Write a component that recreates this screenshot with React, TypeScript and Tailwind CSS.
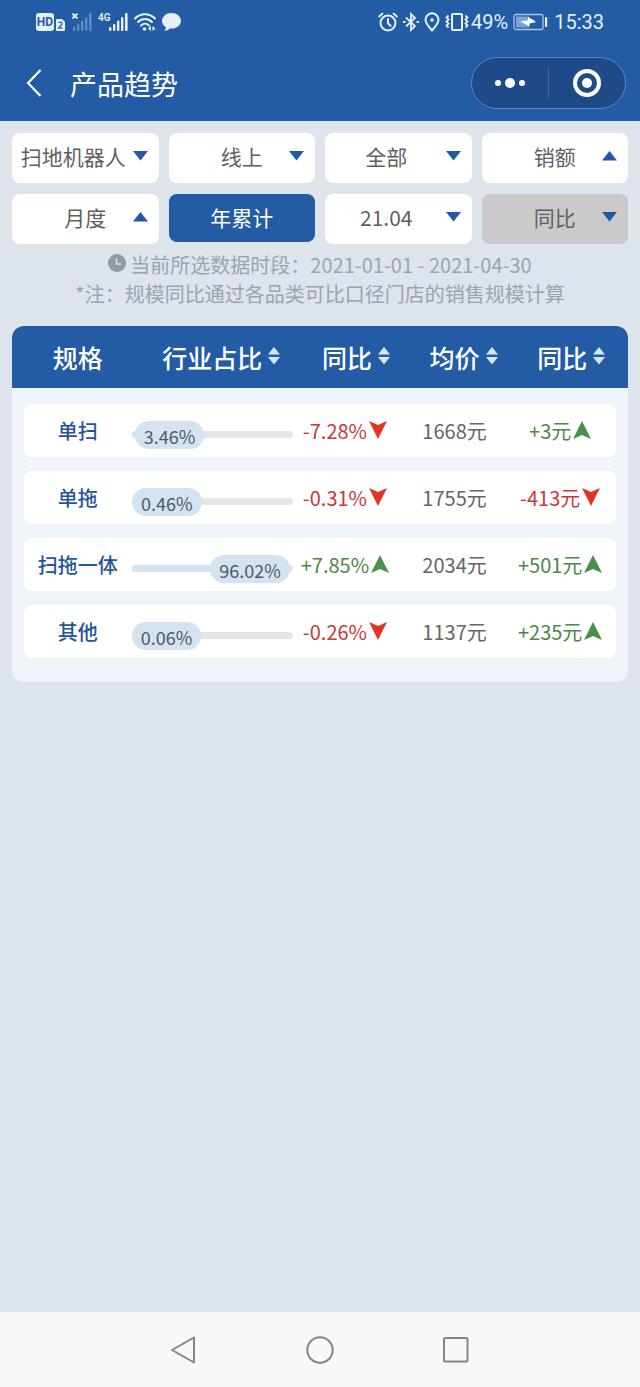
import React, { useState } from 'react';
import clsx from 'clsx';

interface Filter {
  label: string;
  options: string[];
  open?: boolean;
  shifted?: boolean;
  disabled?: boolean;
}

interface Change {
  text: string;
  up: boolean;
}

interface Row {
  name: string;
  share: number;
  shareChange: Change;
  price: string;
  priceChange: Change;
}

const topFilters: Filter[] = [
  { label: '品类', options: ['扫地机器人'], shifted: true },
  { label: '渠道', options: ['线上'] },
  { label: '范围', options: ['全部'], shifted: true },
  { label: '指标', options: ['销额'], open: true },
];

const periodFilter: Filter = { label: '周期', options: ['月度'], open: true };
const monthFilter: Filter = { label: '月份', options: ['21.04'], shifted: true };
const compareFilter: Filter = { label: '对比', options: ['同比'], disabled: true };

const columns = [
  { title: '规格', sortable: false },
  { title: '行业占比', sortable: true },
  { title: '同比', sortable: true },
  { title: '均价', sortable: true },
  { title: '同比', sortable: true },
];

const rows: Row[] = [
  { name: '单扫', share: 3.46, shareChange: { text: '-7.28%', up: false }, price: '1668元', priceChange: { text: '+3元', up: true } },
  { name: '单拖', share: 0.46, shareChange: { text: '-0.31%', up: false }, price: '1755元', priceChange: { text: '-413元', up: false } },
  { name: '扫拖一体', share: 96.02, shareChange: { text: '+7.85%', up: true }, price: '2034元', priceChange: { text: '+501元', up: true } },
  { name: '其他', share: 0.06, shareChange: { text: '-0.26%', up: false }, price: '1137元', priceChange: { text: '+235元', up: true } },
];

function SignalBars({ className }: { className?: string }) {
  return (
    <g className={className} fill="currentColor">
      <rect x="0" y="14" width="2.4" height="4" rx="1" />
      <rect x="4" y="11" width="2.4" height="7" rx="1" />
      <rect x="8" y="7.5" width="2.4" height="10.5" rx="1" />
      <rect x="12" y="4" width="2.4" height="14" rx="1" />
      <rect x="16" y="0" width="2.6" height="18" rx="1" />
    </g>
  );
}

function StatusBar() {
  return (
    <div className="flex h-11 items-center justify-between px-9 text-[#e6f0fb]">
      <div className="flex items-center gap-1.5">
        <div className="flex items-end gap-0.5">
          <span className="flex h-[18px] w-[18px] items-center justify-center rounded-[3px] bg-[#e6f0fb] font-[Roboto] text-xs font-bold text-[#235ba5]">HD</span>
          <svg width="9" height="12" viewBox="0 0 9 12">
            <path d="M1 0h5l3 3v8a1 1 0 0 1-1 1H1a1 1 0 0 1-1-1V1a1 1 0 0 1 1-1z" fill="currentColor" />
            <path d="M2.6 4.2c.3-1.6 3.6-1.6 3.6.3 0 1.5-2.2 2.4-3.6 4.7h4" fill="none" stroke="#235ba5" strokeWidth="1.2" />
          </svg>
        </div>
        <svg width="21" height="18" viewBox="0 0 21 18">
          <path d="M1.500.5l5 5M6.500.5l-5 5" stroke="currentColor" strokeWidth="1.800" />
          <g transform="translate(2 0)">
            <SignalBars className="text-[#5d8ac6]" />
          </g>
        </svg>
        <svg width="30" height="18" viewBox="0 0 30 18">
          <text x="0" y="8" fontFamily="Roboto" fontSize="10" fontWeight="600" fill="currentColor">4G</text>
          <g transform="translate(11 0)">
            <SignalBars />
          </g>
        </svg>
        <svg width="22" height="18" viewBox="0 0 22 18" fill="none" stroke="currentColor" strokeWidth="2" strokeLinecap="round">
          <path d="M1 5.500C6.500-.2 15.500-.2 21 5.500" />
          <path d="M4 9c4-4 10-4 14 0" />
          <path d="M7 12.500c2.400-2.400 5.600-2.400 8 0" />
          <circle cx="10.500" cy="16" r="1.800" fill="currentColor" stroke="none" />
          <path d="M17 13l-3 2.500 3 2.500zM18.500 13l3 2.500-3 2.500z" fill="currentColor" stroke="none" />
        </svg>
        <svg width="19" height="18" viewBox="0 0 19 18" fill="currentColor">
          <path d="M9.500 0C4.200 0 0 3.400 0 7.800c0 2.700 1.500 5 3.900 6.400-.1 1.300-.6 2.500-1.400 3.600 2.200-.1 3.900-.9 5.200-2.300.6.100 1.200.1 1.800.1 5.300 0 9.500-3.400 9.500-7.800S14.800 0 9.500 0z" />
        </svg>
      </div>

      <div className="flex items-center gap-[5px]">
        <svg width="20" height="20" viewBox="0 0 20 20" fill="none" stroke="currentColor" strokeWidth="2" strokeLinecap="round">
          <circle cx="10" cy="11" r="7.500" />
          <path d="M10 7v4.200l2.500 2.600M1.200 4.500l3-2.800M18.800 4.500l-3-2.800" />
        </svg>
        <svg width="16" height="20" viewBox="0 0 16 20" fill="none" stroke="currentColor" strokeWidth="1.800">
          <path d="M3 5.500l9 8.500-4 4V2l4 4-9 8.500" />
          <path d="M0 10h2.500M13.500 10H16" strokeWidth="2.200" />
        </svg>
        <svg width="16" height="20" viewBox="0 0 16 20" fill="none" stroke="currentColor" strokeWidth="2">
          <path d="M8 18.500C4 14 1.500 11 1.500 7.800a6.500 6.500 0 0 1 13 0C14.500 11 12 14 8 18.500z" />
          <circle cx="8" cy="8" r="1.800" fill="currentColor" stroke="none" />
        </svg>
        <div className="flex items-center gap-0.5">
          <svg width="24" height="20" viewBox="0 0 24 20" fill="none" stroke="currentColor">
            <rect x="7" y="2" width="10" height="16" rx="1" strokeWidth="2" />
            <path d="M3.500 3.500l-2 2 2 2-2 2 2 2-2 2 2 2M20.500 3.500l2 2-2 2 2 2-2 2 2 2-2 2" strokeWidth="1.800" />
          </svg>
          <span className="font-[Roboto] text-xl leading-6">49%</span>
        </div>
        <svg width="36" height="18" viewBox="0 0 36 18">
          <rect x="1" y="1.500" width="29" height="15" rx="2" fill="none" stroke="#a9c4e6" strokeWidth="1.300" />
          <rect x="3" y="3.500" width="13" height="11" fill="#7fa3d5" />
          <path d="M7.500 8.500l7.500-1.200V4l8 4.500h-2l2 .8-6.500 1.200V13.500z" fill="#fff" />
          <rect x="32" y="4" width="2.200" height="10" rx="1" fill="currentColor" />
        </svg>
        <span className="font-[Roboto] text-xl leading-6">15:33</span>
      </div>
    </div>
  );
}

function NavBar() {
  return (
    <div className="flex h-[77px] items-center justify-between pr-3.5 pl-6">
      <div className="flex items-center gap-7">
        <button type="button" aria-label="返回">
          <svg width="18" height="28" viewBox="0 0 18 28" fill="none" stroke="#fff" strokeWidth="2.200">
            <path d="M16.500 1L4 14l12.500 13" />
          </svg>
        </button>
        <h1 className="pt-0.5 text-[27px] leading-9 text-white">产品趋势</h1>
      </div>
      <div className="flex h-[52px] w-[155px] items-center rounded-full border border-[#5a85bf] bg-[#1e4b88]">
        <button type="button" aria-label="更多" className="flex flex-1 justify-center">
          <svg width="32" height="12" viewBox="0 0 32 12" fill="#fff">
            <circle cx="4" cy="6" r="3" />
            <circle cx="16" cy="6" r="5" />
            <circle cx="28" cy="6" r="3" />
          </svg>
        </button>
        <span className="h-8 w-px bg-[#3c68a5]" />
        <button type="button" aria-label="关闭" className="flex flex-1 justify-center">
          <svg width="28" height="28" viewBox="0 0 28 28">
            <circle cx="14" cy="14" r="12" fill="none" stroke="#fff" strokeWidth="4" />
            <circle cx="14" cy="14" r="5" fill="#fff" />
          </svg>
        </button>
      </div>
    </div>
  );
}

function FilterSelect({ label, options, open, shifted, disabled }: Filter) {
  const [value, setValue] = useState(options[0]);

  return (
    <div className="relative">
      <select
        aria-label={label}
        value={value}
        disabled={disabled}
        onChange={(e) => setValue(e.target.value)}
        className={clsx(
          'h-[50px] w-full appearance-none rounded-lg pb-0.5 text-center text-[21px] text-[#5f5f5f] opacity-100 outline-none',
          shifted ? 'pr-6' : 'px-6',
          disabled ? 'bg-[#cacaca]' : 'bg-white'
        )}
      >
        {options.map((option) => (
          <option key={option}>{option}</option>
        ))}
      </select>
      <svg className="pointer-events-none absolute top-4 right-2.5" width="16" height="14" viewBox="0 0 16 14" fill="#2458a4">
        {open ? <path d="M7.500 2L15 11.500H0z" /> : <path d="M0 2h15L7.500 11.500z" />}
      </svg>
    </div>
  );
}

function SortIcon() {
  return (
    <svg className="absolute top-2.5 left-full ml-1.5" width="12" height="18" viewBox="0 0 12 18" fill="#d5e5fb">
      <path d="M6 0l6 7.500H0z" />
      <path d="M0 10h12l-6 7.500z" />
    </svg>
  );
}

function ShareBar({ value }: { value: number }) {
  return (
    <div className="relative flex h-7 w-full items-center">
      <div className="absolute inset-x-0 h-[7px] overflow-hidden rounded-sm bg-[#e5e5e5]">
        <div className="h-full bg-[#d3e3f1]" style={{ width: `${value}%` }} />
      </div>
      <span style={{ flexGrow: value }} />
      <span className="relative h-7 rounded-full bg-[#d3e3f1] px-[9px] text-lg leading-[30px] text-[#505a66]">{value.toFixed(2)}%</span>
      <span style={{ flexGrow: 100 - value }} />
    </div>
  );
}

function ChangeValue({ text, up }: Change) {
  return (
    <div className={clsx('flex items-center justify-center gap-0.5 pr-1', up ? 'text-[#4d8749]' : 'text-[#c9393a]')}>
      <span>{text}</span>
      <svg width="18" height="18" viewBox="0 0 18 18" className={clsx('mb-0.5', up ? 'text-[#4b9048]' : 'text-[#e03424]')} fill="currentColor">
        {up ? <path d="M9 0l9 18-9-4-9 4z" /> : <path d="M0 0l9 4 9-4-9 18z" />}
      </svg>
    </div>
  );
}

function TrendTable() {
  return (
    <table className="mx-3 mt-[18px] block overflow-hidden rounded-xl bg-[#eff4fa] whitespace-nowrap">
      <thead className="block bg-[#235ba5] px-3 text-[25px] text-white">
        <tr className="grid h-[62px] grid-cols-[2fr_3fr_2fr_2fr_2fr] items-center">
          {columns.map((column, i) => (
            <th key={i} className="leading-10 font-medium">
              {column.sortable ? (
                <button type="button" className="relative block w-fit mx-auto">
                  {column.title}
                  <SortIcon />
                </button>
              ) : (
                column.title
              )}
            </th>
          ))}
        </tr>
      </thead>
      <tbody className="flex flex-col gap-3.5 px-3 pt-4 pb-6 text-xl">
        {rows.map((row) => (
          <tr key={row.name} className="grid h-[53px] grid-cols-[2fr_3fr_2fr_2fr_2fr] items-center rounded-lg bg-white text-center">
            <th scope="row" className="font-medium text-[#24559b]">{row.name}</th>
            <td className="pt-2">
              <ShareBar value={row.share} />
            </td>
            <td>
              <ChangeValue {...row.shareChange} />
            </td>
            <td className="text-[#666]">{row.price}</td>
            <td>
              <ChangeValue {...row.priceChange} />
            </td>
          </tr>
        ))}
      </tbody>
    </table>
  );
}

function SystemNav() {
  return (
    <nav className="flex h-[75px] items-center justify-center gap-27 bg-[#f8f8f8]">
      <button type="button" aria-label="后退">
        <svg width="28" height="28" viewBox="0 0 28 28" fill="none" stroke="#858585" strokeWidth="2" strokeLinejoin="round">
          <path d="M24 1.500v25L2 14z" />
        </svg>
      </button>
      <button type="button" aria-label="主页">
        <svg width="28" height="28" viewBox="0 0 28 28" fill="none" stroke="#858585" strokeWidth="2">
          <circle cx="14" cy="14" r="12.700" />
        </svg>
      </button>
      <button type="button" aria-label="最近任务">
        <svg width="28" height="28" viewBox="0 0 28 28" fill="none" stroke="#858585" strokeWidth="2">
          <rect x="2" y="2" width="23.500" height="23.500" rx="1" />
        </svg>
      </button>
    </nav>
  );
}

export default function App() {
  return (
    <div className="flex min-h-screen flex-col bg-[#dde4ec] font-['Noto_Sans_CJK_SC',sans-serif]">
      <header className="bg-[#235ba5]">
        <StatusBar />
        <NavBar />
      </header>

      <main className="flex-1">
        <div className="grid grid-cols-4 gap-x-2.5 gap-y-[11px] px-3 pt-3">
          {topFilters.map((filter) => (
            <FilterSelect key={filter.label} {...filter} />
          ))}
          <FilterSelect {...periodFilter} />
          <button type="button" className="h-12 rounded-lg bg-[#235ba5] text-[21px] text-white">年累计</button>
          <FilterSelect {...monthFilter} />
          <FilterSelect {...compareFilter} />
        </div>

        <div className="mt-1.5 text-center text-xl leading-[29px] text-[#9ca4ab]">
          <p className="flex items-center justify-center gap-1">
            <svg className="mb-1" width="18" height="18" viewBox="0 0 18 18">
              <circle cx="9" cy="9" r="9" fill="#92999f" />
              <path d="M8.500 4.500V10H13" fill="none" stroke="#dde4ec" strokeWidth="1.500" />
            </svg>
            当前所选数据时段：2021-01-01 - 2021-04-30
          </p>
          <p>*注：规模同比通过各品类可比口径门店的销售规模计算</p>
        </div>

        <TrendTable />
      </main>

      <SystemNav />
    </div>
  );
}
